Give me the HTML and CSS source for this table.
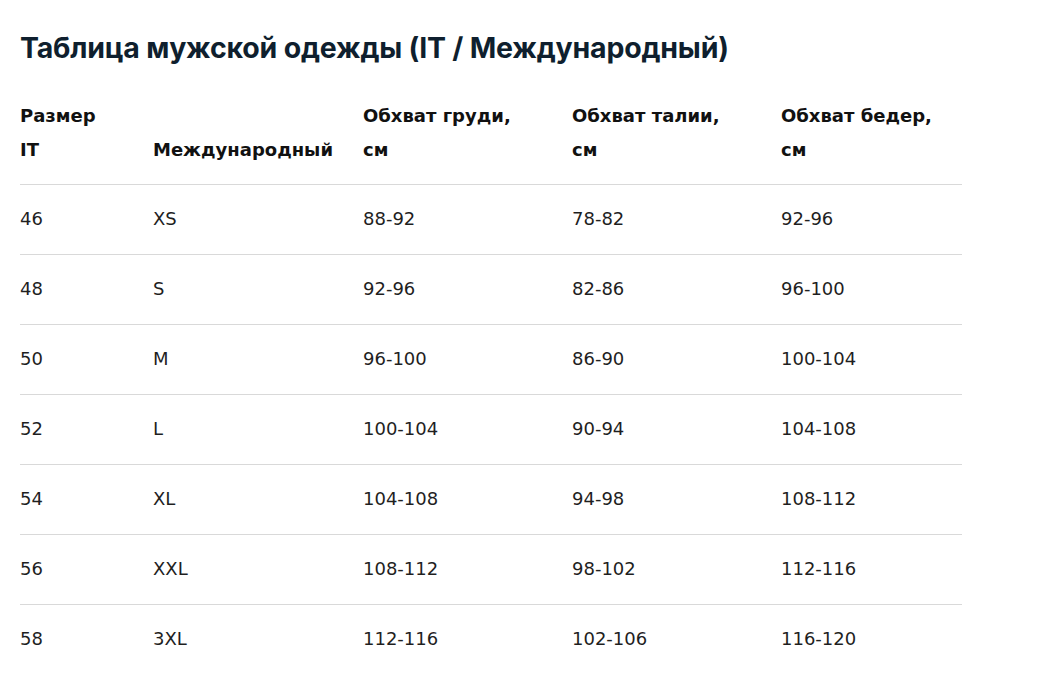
FILE: index.html
```html
<!DOCTYPE html>
<html lang="ru">
<head>
<meta charset="utf-8">
<link rel="stylesheet" href="styles.css">
</head>
<body>
<main class="page">
  <h1 class="title">Таблица мужской одежды (IT / Международный)</h1>
  <table class="size-table">
    <colgroup>
      <col class="c1"><col class="c2"><col class="c3"><col class="c4"><col class="c5">
    </colgroup>
    <thead>
      <tr>
        <th>Размер<br>IT</th>
        <th>Международный</th>
        <th>Обхват груди,<br>см</th>
        <th>Обхват талии,<br>см</th>
        <th>Обхват бедер,<br>см</th>
      </tr>
    </thead>
    <tbody>
      <tr><td>46</td><td>XS</td><td>88-92</td><td>78-82</td><td>92-96</td></tr>
      <tr><td>48</td><td>S</td><td>92-96</td><td>82-86</td><td>96-100</td></tr>
      <tr><td>50</td><td>M</td><td>96-100</td><td>86-90</td><td>100-104</td></tr>
      <tr><td>52</td><td>L</td><td>100-104</td><td>90-94</td><td>104-108</td></tr>
      <tr><td>54</td><td>XL</td><td>104-108</td><td>94-98</td><td>108-112</td></tr>
      <tr><td>56</td><td>XXL</td><td>108-112</td><td>98-102</td><td>112-116</td></tr>
      <tr class="last"><td>58</td><td>3XL</td><td>112-116</td><td>102-106</td><td>116-120</td></tr>
    </tbody>
  </table>
</main>
</body>
</html>
```

FILE: styles.css
```css
html, body {
  margin: 0;
  padding: 0;
  background: #ffffff;
}

.page {
  padding: 31px 20px 0;
  font-family: "DejaVu Sans", "Noto Sans", "Liberation Sans", sans-serif;
  color: #1a1a1a;
}

.title {
  margin: 0 0 34px;
  font-family: Inter, "DejaVu Sans", sans-serif;
  font-size: 28.5px;
  line-height: 34px;
  font-weight: 700;
  color: #0f1f2e;
  letter-spacing: -0.2px;
}

.size-table {
  border-collapse: collapse;
  width: 942px;
  table-layout: fixed;
}

.c1 { width: 133px; }
.c2 { width: 210px; }
.c3 { width: 209px; }
.c4 { width: 209px; }
.c5 { width: 181px; }

.size-table th {
  text-align: left;
  vertical-align: bottom;
  font-size: 18px;
  font-weight: 700;
  line-height: 34px;
  padding: 0 0 17px;
  color: #111111;
  border-bottom: 1px solid #d9d9d9;
}

.size-table td {
  font-size: 18px;
  font-weight: 400;
  line-height: 34px;
  padding: 17px 0 18px;
  color: #1f1f1f;
  border-bottom: 1px solid #d9d9d9;
}

.size-table tr.last td {
  border-bottom: none;
}
```
